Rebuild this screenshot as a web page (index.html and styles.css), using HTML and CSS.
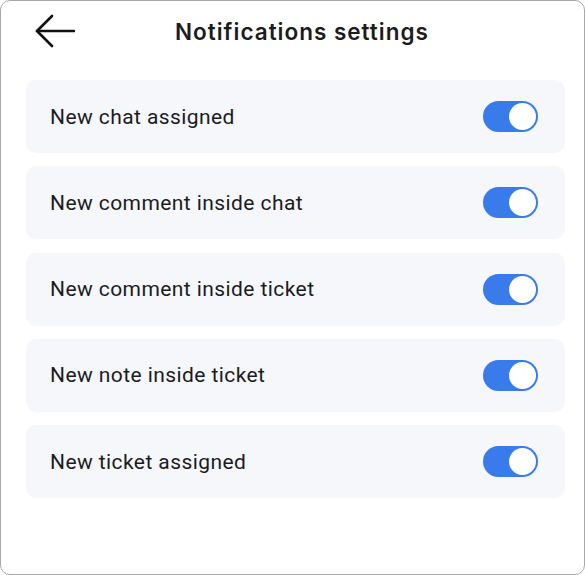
FILE: index.html
```html
<!DOCTYPE html>
<html lang="en">
<head>
  <meta charset="UTF-8">
  <meta name="viewport" content="width=device-width, initial-scale=1.0">
  <title>Notifications settings</title>
  <link rel="stylesheet" href="styles.css">
</head>
<body>

  <div class="frame">
    <div class="header">
      <button class="back-btn" aria-label="Back">
        <svg width="40" height="34" viewBox="0 0 40 34" fill="none" stroke="#111" stroke-width="2.6" stroke-linecap="round" stroke-linejoin="round">
          <path d="M39 17H2"/>
          <path d="M17 2L2 17L17 32"/>
        </svg>
      </button>
      <h1 class="title">Notifications settings</h1>
    </div>

    <ul class="settings">
      <li class="setting">
        <span>New chat assigned</span>
        <label class="switch"><input type="checkbox" checked><span class="slider"></span></label>
      </li>
      <li class="setting">
        <span>New comment inside chat</span>
        <label class="switch"><input type="checkbox" checked><span class="slider"></span></label>
      </li>
      <li class="setting">
        <span>New comment inside ticket</span>
        <label class="switch"><input type="checkbox" checked><span class="slider"></span></label>
      </li>
      <li class="setting">
        <span>New note inside ticket</span>
        <label class="switch"><input type="checkbox" checked><span class="slider"></span></label>
      </li>
      <li class="setting">
        <span>New ticket assigned</span>
        <label class="switch"><input type="checkbox" checked><span class="slider"></span></label>
      </li>
    </ul>
  </div>

</body>
</html>
```

FILE: styles.css
```css
:root {
  --text: #1c1c1e;
  --card-bg: #f5f7fa;
  --blue: #3a7bec;
  --frame-border: #a9a9a9;
}

* {
  box-sizing: border-box;
}

body {
  margin: 0;
  font-family: Roboto, 'Liberation Sans', sans-serif;
  color: var(--text);
  background: #fff;
}

.frame {
  width: 585px;
  height: 575px;
  border: 1px solid var(--frame-border);
  border-radius: 10px;
  background: #fff;
  overflow: hidden;
}

.header {
  display: flex;
  align-items: center;
  gap: 100px;
  height: 60px;
  padding-left: 34px;
}

.back-btn {
  display: flex;
  padding: 0;
  border: none;
  background: none;
  cursor: pointer;
}

.title {
  margin: 0;
  font-family: Inter, Roboto, sans-serif;
  font-size: 22.5px;
  font-weight: 600;
  letter-spacing: 1px;
}

.settings {
  list-style: none;
  margin: 19px 0 0 25px;
  padding: 0;
  width: 539px;
  display: flex;
  flex-direction: column;
  gap: 13.3px;
}

.setting {
  display: flex;
  align-items: center;
  justify-content: space-between;
  height: 73px;
  padding: 0 27px 0 24px;
  background: var(--card-bg);
  border-radius: 10px;
  font-size: 21px;
  letter-spacing: 0.42px;
}

.switch {
  position: relative;
  width: 55px;
  height: 31px;
}

.switch input {
  display: none;
}

.slider {
  position: absolute;
  inset: 0;
  background: var(--blue);
  border-radius: 16px;
}

.slider::after {
  content: "";
  position: absolute;
  top: 2px;
  right: 2px;
  width: 27px;
  height: 27px;
  border-radius: 50%;
  background: #fff;
}
```
